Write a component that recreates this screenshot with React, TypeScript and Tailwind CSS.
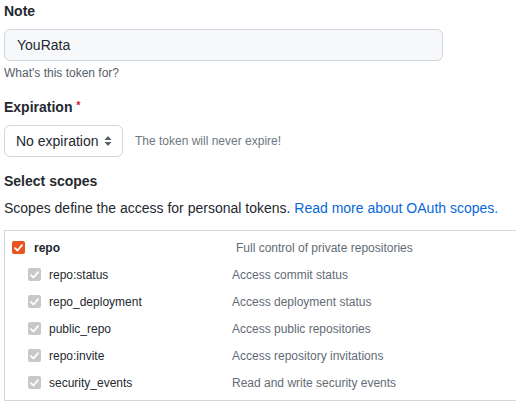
const scopes = [
  { name: "repo:status", description: "Access commit status" },
  { name: "repo_deployment", description: "Access deployment status" },
  { name: "public_repo", description: "Access public repositories" },
  { name: "repo:invite", description: "Access repository invitations" },
  { name: "security_events", description: "Read and write security events" },
];

const Check = ({ color, size }: { color: string; size: number }) => (
  <span
    className="flex shrink-0 items-center justify-center rounded-[2px]"
    style={{ backgroundColor: color, width: size, height: size }}
  >
    <svg width="9" height="8" viewBox="0 0 9 8" fill="none">
      <path d="M1 4.2 L3.5 6.5 L8 1.2" stroke="white" strokeWidth="1.8" strokeLinecap="round" strokeLinejoin="round" />
    </svg>
  </span>
);

export default function App() {
  return (
    <div className="w-[516px] h-[405px] overflow-hidden bg-white pl-[4px] text-[#24292f] font-['Liberation_Sans',Arial,sans-serif]">
      <div className="pt-[1px] text-[14px] leading-[21px] font-bold">Note</div>
      <div className="mt-[7px] flex h-[32px] w-[439px] items-center rounded-[6px] border border-[#d0d7de] bg-[#f6f8fa] pl-[12px] text-[14px]">
        YouRata
      </div>
      <div className="mt-[3px] text-[12px] leading-[18px] text-[#57606a]">What's this token for?</div>

      <div className="mt-[15px] h-[21px] text-[14px] leading-[21px] font-bold">
        Expiration <span className="relative -top-[3px] text-[11px] leading-none text-[#cf222e]">*</span>
      </div>
      <div className="mt-[7px] flex items-center">
        <div className="flex h-[32px] w-[119px] items-center justify-between rounded-[6px] border border-[#d0d7de] bg-white pl-[11px] pr-[10px] text-[14px]">
          <span>No expiration</span>
          <svg width="8" height="12" viewBox="0 0 8 12" className="text-[#57606a]">
            <path d="M4 1 L7.5 5 H0.5 Z M4 11 L0.5 7 H7.5 Z" fill="currentColor" />
          </svg>
        </div>
        <span className="ml-[12px] text-[12px] text-[#6e7781]">The token will never expire!</span>
      </div>

      <div className="mt-[14px] text-[14px] leading-[21px] font-bold">Select scopes</div>
      <div className="mt-[6px] text-[14px] leading-[21px]">
        Scopes define the access for personal tokens.{" "}
        <span className="text-[#0969da]">Read more about OAuth scopes.</span>
      </div>

      <div className="mt-[11px] border-l border-t border-b border-[#d0d7de] pt-[3px] pb-[4px]">
        <div className="flex h-[27px] items-center text-[12px]">
          <div className="flex w-[231px] items-center pl-[7px]">
            <Check color="#e95420" size={13} />
            <span className="ml-[9px] font-bold">repo</span>
          </div>
          <span className="text-[#636c76]">Full control of private repositories</span>
        </div>
        {scopes.map((s) => (
          <div key={s.name} className="flex h-[27px] items-center text-[12px]">
            <div className="flex w-[227px] items-center pl-[23px]">
              <Check color="#c8c8c8" size={13} />
              <span className="ml-[8px]">{s.name}</span>
            </div>
            <span className="text-[#636c76]">{s.description}</span>
          </div>
        ))}
      </div>
    </div>
  );
}
